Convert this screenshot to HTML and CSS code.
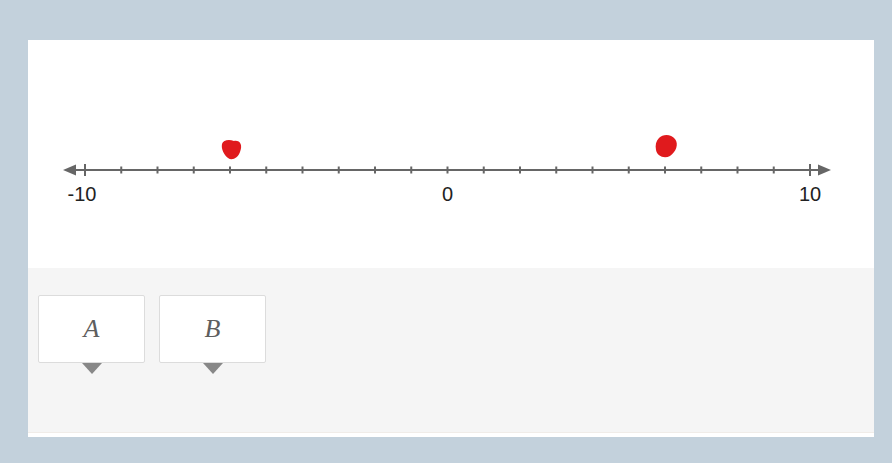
FILE: index.html
```html
<!DOCTYPE html>
<html lang="en">
<head>
  <meta charset="UTF-8">
  <meta name="viewport" content="width=device-width, initial-scale=1.0">
  <title>Number line</title>
  <link rel="stylesheet" href="styles.css">
</head>
<body>
  <div class="panel">
    <div class="graph">
      <svg class="numberline" width="846" height="228" viewBox="0 0 846 228">
        <!-- axis -->
        <line x1="40" y1="130" x2="798" y2="130" class="axis"/>
        <polygon points="35,130 48,124.5 48,135.5" class="arrow"/>
        <polygon points="803,130 790,124.5 790,135.5" class="arrow"/>
        <g id="ticks" class="ticks"></g>
        <g class="labels">
          <text x="54" y="161">-10</text>
          <text x="419.5" y="161">0</text>
          <text x="782" y="161">10</text>
        </g>
        <!-- points -->
        <path class="dot" d="M194,104 C195,100 201,99 206,101 C212,100 215,105 212,112 C210,118 204,121 200,118 C196,115 193,109 194,104 Z"/>
        <path class="dot" d="M631,98 C635,94 643,94 647,99 C651,104 648,112 642,116 C636,119 629,116 628,110 C627,105 628,101 631,98 Z"/>
      </svg>
    </div>
    <div class="tray">
      <div class="card"><span class="var">A</span></div>
      <div class="card"><span class="var">B</span></div>
    </div>
  </div>

  <script>
    const ticks = document.getElementById('ticks');
    for (let i = 0; i <= 20; i++) {
      const x = 57 + i * 36.25;
      const h = (i === 0 || i === 20) ? 6 : 3.5;
      const t = document.createElementNS('http://www.w3.org/2000/svg', 'line');
      t.setAttribute('x1', x);
      t.setAttribute('x2', x);
      t.setAttribute('y1', 130 - h);
      t.setAttribute('y2', 130 + h);
      ticks.appendChild(t);
    }
  </script>
</body>
</html>
```
FILE: styles.css
```css
body {
  margin: 0;
  padding: 40px 18px 27px 28px;
  background-color: #c3d1dc;
  font-family: "Liberation Sans", Arial, sans-serif;
}
.panel {
  width: 846px;
  background-color: #fff;
  padding-bottom: 4px;
}
.graph {
  height: 228px;
}
.numberline {
  display: block;
}
.axis {
  stroke: #666;
  stroke-width: 2;
}
.arrow {
  fill: #666;
}
.ticks line {
  stroke: #666;
  stroke-width: 2;
}
.labels text {
  font-family: "Liberation Sans", Arial, sans-serif;
  font-size: 20px;
  fill: #222;
  text-anchor: middle;
}
.dot {
  fill: #e01a1d;
}
.tray {
  height: 137px;
  padding: 27px 10px 0;
  background-color: #f5f5f5;
  border-bottom: 1px solid #f0ece8;
  display: flex;
  gap: 14px;
  align-items: flex-start;
}
.card {
  position: relative;
  width: 105px;
  height: 66px;
  background-color: #fff;
  border: 1px solid #dcdcdc;
  border-radius: 2px;
  display: flex;
  align-items: center;
  justify-content: center;
}
.card::after {
  content: "";
  position: absolute;
  left: 50%;
  bottom: -12px;
  margin-left: -10px;
  border-left: 10px solid transparent;
  border-right: 10px solid transparent;
  border-top: 11px solid #888;
}
.var {
  font-family: "Liberation Serif", "Times New Roman", serif;
  font-style: italic;
  font-size: 26px;
  color: #5e5e5e;
}
```
